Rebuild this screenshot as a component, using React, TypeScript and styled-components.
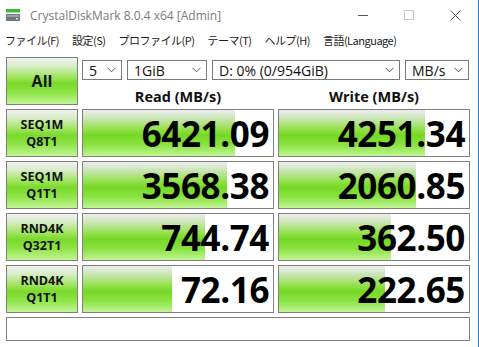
import React from "react";
import styled, { createGlobalStyle } from "styled-components";

type Result = {
  line1: string;
  line2: string;
  read: string;
  readFill: number;
  write: string;
  writeFill: number;
};

const results: Result[] = [
  { line1: "SEQ1M", line2: "Q8T1", read: "6421.09", readFill: 80, write: "4251.34", writeFill: 77 },
  { line1: "SEQ1M", line2: "Q1T1", read: "3568.38", readFill: 76, write: "2060.85", writeFill: 72 },
  { line1: "RND4K", line2: "Q32T1", read: "744.74", readFill: 64, write: "362.50", writeFill: 59 },
  { line1: "RND4K", line2: "Q1T1", read: "72.16", readFill: 47, write: "222.65", writeFill: 56 },
];

const menus = ["ファイル(F)", "設定(S)", "プロファイル(P)", "テーマ(T)", "ヘルプ(H)", "言語(Language)"];

const GlobalStyle = createGlobalStyle`
  html, body {
    margin: 0;
    padding: 0;
    background: #ffffff;
  }
  body {
    font-family: "Open Sans", "Noto Sans CJK JP", sans-serif;
  }
`;

const Window = styled.div`
  width: 479px;
  height: 347px;
  box-sizing: border-box;
  border-right: 1px solid #1c7fd6;
  background: #ffffff;
  overflow: hidden;
`;

const TitleBar = styled.div`
  height: 30px;
  display: flex;
  align-items: center;
  padding-left: 6px;
`;

const Title = styled.span`
  margin-left: 10px;
  font-family: "Open Sans", sans-serif;
  font-size: 12px;
  color: #7a7a7a;
`;

const Controls = styled.div`
  margin-left: auto;
  display: flex;
  align-items: center;
`;

const ControlButton = styled.div`
  width: 46px;
  height: 30px;
  display: flex;
  align-items: center;
  justify-content: center;
`;

const MenuBar = styled.div`
  height: 20px;
  display: flex;
  align-items: center;
  padding-left: 5px;
  gap: 13px;
`;

const MenuItem = styled.span`
  font-family: "Noto Sans CJK JP", "Open Sans", sans-serif;
  font-size: 11px;
  color: #1a1a1a;
  letter-spacing: -0.5px;
`;

const Board = styled.div`
  display: grid;
  grid-template-columns: 72px 192px 192px;
  grid-auto-rows: 48px;
  column-gap: 4px;
  row-gap: 4px;
  padding: 7px 0 0 6px;
`;

const TestButton = styled.div<{ $big?: boolean }>`
  box-sizing: border-box;
  border: 1px solid #808080;
  background: linear-gradient(
    to bottom,
    #f2f2f2 0%,
    #d6ecc6 18%,
    #9ee45c 42%,
    #7ad92a 55%,
    #8fe448 75%,
    #c2f594 100%
  );
  display: flex;
  flex-direction: column;
  align-items: center;
  justify-content: center;
  font-family: "Open Sans", sans-serif;
  font-weight: 700;
  font-size: ${(p) => (p.$big ? "16px" : "12.5px")};
  line-height: ${(p) => (p.$big ? "1" : "17px")};
  color: #111;
`;

const Head = styled.div`
  grid-column: 2 / 4;
  display: flex;
  flex-direction: column;
  padding-top: 3px;
`;

const Selects = styled.div`
  display: flex;
  gap: 5px;
  height: 20px;
`;

const Select = styled.div<{ $w: number }>`
  box-sizing: border-box;
  width: ${(p) => p.$w}px;
  height: 20px;
  border: 1px solid #7a7a7a;
  background: #fff;
  display: flex;
  align-items: center;
  padding: 0 5px 0 6px;
  font-family: "Open Sans", sans-serif;
  font-size: 14px;
  color: #111;
  svg {
    margin-left: auto;
  }
`;

const Headers = styled.div`
  display: grid;
  grid-template-columns: 192px 192px;
  column-gap: 4px;
  margin-top: 7px;
`;

const HeaderText = styled.div`
  text-align: center;
  font-family: "Open Sans", sans-serif;
  font-weight: 700;
  font-size: 14.5px;
  color: #111;
`;

const Meter = styled.div`
  position: relative;
  box-sizing: border-box;
  border: 1px solid #808080;
  background: #fff;
  overflow: hidden;
`;

const Fill = styled.div`
  position: absolute;
  left: 0;
  top: 0;
  bottom: 0;
  background: linear-gradient(
    to bottom,
    #ececec 0%,
    #cfe6bf 16%,
    #98e252 40%,
    #76d826 55%,
    #88e240 75%,
    #c2f594 100%
  );
`;

const Value = styled.div`
  position: relative;
  height: 100%;
  display: flex;
  align-items: center;
  justify-content: flex-end;
  padding-right: 4px;
  font-family: "Open Sans", sans-serif;
  font-weight: 700;
  font-size: 35px;
  letter-spacing: -0.4px;
  color: #000;
`;

const Status = styled.div`
  grid-column: 1 / 4;
  box-sizing: border-box;
  height: 24px;
  border: 1px solid #808080;
  background: #fff;
  align-self: start;
`;

const Chevron = () => (
  <svg width="9" height="6" viewBox="0 0 9 6">
    <path d="M0.5 0.8 L4.5 4.8 L8.5 0.8" stroke="#555" strokeWidth="1" fill="none" />
  </svg>
);

const AppIcon = () => (
  <svg width="14" height="12" viewBox="0 0 14 12">
    <rect x="0" y="0" width="14" height="3.5" fill="#3cb83c" />
    <rect x="0" y="5" width="14" height="7" fill="#6e7a80" />
    <rect x="1" y="6" width="12" height="2" fill="#9aa4a8" />
    <rect x="10" y="9" width="2" height="1.5" fill="#d8dde0" />
  </svg>
);

export default function App() {
  return (
    <Window>
      <GlobalStyle />
      <TitleBar>
        <AppIcon />
        <Title>CrystalDiskMark 8.0.4 x64 [Admin]</Title>
        <Controls>
          <ControlButton>
            <svg width="10" height="10" viewBox="0 0 10 10">
              <path d="M0 5.5 H10" stroke="#555" strokeWidth="1" />
            </svg>
          </ControlButton>
          <ControlButton>
            <svg width="10" height="10" viewBox="0 0 10 10">
              <rect x="0.5" y="0.5" width="9" height="9" stroke="#c8c8c8" fill="none" />
            </svg>
          </ControlButton>
          <ControlButton>
            <svg width="11" height="11" viewBox="0 0 11 11">
              <path d="M0.5 0.5 L10.5 10.5 M10.5 0.5 L0.5 10.5" stroke="#555" strokeWidth="1" />
            </svg>
          </ControlButton>
        </Controls>
      </TitleBar>
      <MenuBar>
        {menus.map((m) => (
          <MenuItem key={m}>{m}</MenuItem>
        ))}
      </MenuBar>
      <Board>
        <TestButton $big>All</TestButton>
        <Head>
          <Selects>
            <Select $w={40}>
              5<Chevron />
            </Select>
            <Select $w={80}>
              1GiB<Chevron />
            </Select>
            <Select $w={188}>
              D: 0% (0/954GiB)<Chevron />
            </Select>
            <Select $w={64}>
              MB/s<Chevron />
            </Select>
          </Selects>
          <Headers>
            <HeaderText>Read (MB/s)</HeaderText>
            <HeaderText>Write (MB/s)</HeaderText>
          </Headers>
        </Head>
        {results.map((r) => (
          <React.Fragment key={r.line1 + r.line2}>
            <TestButton>
              <span>{r.line1}</span>
              <span>{r.line2}</span>
            </TestButton>
            <Meter>
              <Fill style={{ width: `${r.readFill}%` }} />
              <Value>{r.read}</Value>
            </Meter>
            <Meter>
              <Fill style={{ width: `${r.writeFill}%` }} />
              <Value>{r.write}</Value>
            </Meter>
          </React.Fragment>
        ))}
        <Status />
      </Board>
    </Window>
  );
}
